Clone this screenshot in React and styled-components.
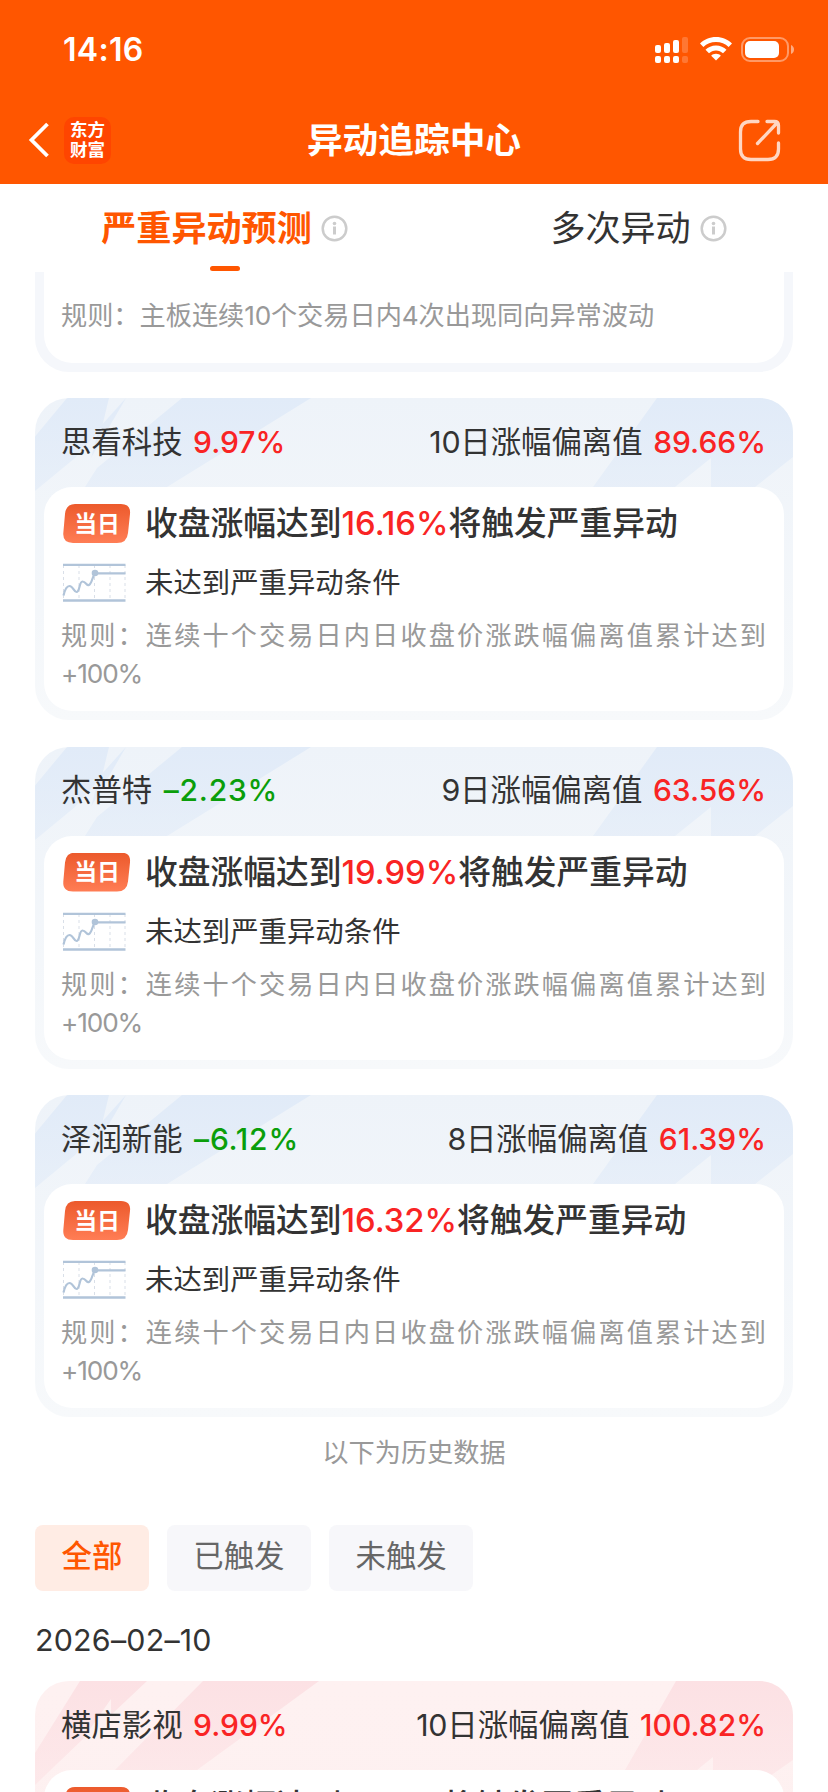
import React from 'react';
import styled, { createGlobalStyle, css } from 'styled-components';

const Global = createGlobalStyle`
  * { box-sizing: border-box; }
  body {
    margin: 0;
    background: #fff;
    font-family: Inter, "Noto Sans CJK SC", sans-serif;
    color: #333;
  }
`;

const Screen = styled.div`
  display: flex;
  flex-direction: column;
  width: 828px;
  height: 1792px;
  overflow: hidden;
  background: #fff;
`;

const Header = styled.header`
  flex: none;
  height: 184px;
  background: #ff5600;
  color: #fff;
`;

const StatusBar = styled.div`
  display: flex;
  align-items: center;
  justify-content: space-between;
  height: 100px;
  padding: 0 34px 0 63px;
`;

const Clock = styled.span`
  font-size: 32px;
  font-weight: 600;
  line-height: 40px;
  letter-spacing: 0.3px;
`;

const NavBar = styled.div`
  display: grid;
  grid-template-columns: 1fr auto 1fr;
  align-items: center;
  height: 80px;
  padding: 0 28px;
`;

const NavLeft = styled.div`
  display: flex;
  align-items: center;
  gap: 14px;
`;

const Logo = styled.div`
  width: 47px;
  height: 47px;
  padding: 2px 0 0 6px;
  border-radius: 10px;
  background: #ff4500;
  font-family: "Noto Sans CJK SC", sans-serif;
  font-size: 17.5px;
  font-weight: 700;
  line-height: 20px;
  white-space: pre-line;
`;

const Title = styled.h1`
  margin: 0;
  font-size: 35.7px;
  font-weight: 700;
  line-height: 50px;
`;

const NavRight = styled.div`
  display: flex;
  justify-content: flex-end;
  padding-right: 19px;
`;

const Tabs = styled.nav`
  flex: none;
  display: flex;
  justify-content: space-around;
  height: 88px;
`;

const Tab = styled.div`
  display: flex;
  flex-direction: column;
  align-items: center;
  justify-content: flex-end;
  font-size: 35.1px;
  font-weight: ${(p) => (p.$active ? 700 : 400)};
  color: ${(p) => (p.$active ? '#ff5600' : '#333')};
  &::after {
    content: '';
    width: 30px;
    height: 5px;
    margin: 11px 0 1px;
    border-radius: 2.5px;
    background: ${(p) => (p.$active ? '#ff5600' : 'transparent')};
  }
`;

const TabLabel = styled.div`
  display: flex;
  align-items: center;
  gap: 9px;
  line-height: 54px;
`;

const Feed = styled.main`
  flex: 1;
  min-height: 0;
  overflow: hidden;
  padding: 0 35px;
`;

const tones = {
  blue: {
    top: '#eef3f9',
    bottom: '#f7f9fb',
    beam: '#e1ebf8',
    shapes: [
      'M32 0H74L67 29L40 60L-18 108V60Z',
      'M91 0L64 30L56 60Z',
      'M147 0H276L132 89H50L62 70Z',
      'M622 0H758V59L720 89H676V60L640 89H558Z',
    ],
  },
  red: {
    top: '#fef1f1',
    bottom: '#fdf0f0',
    beam: '#fce1e4',
    shapes: [
      'M45 0H112L76 34V18L48 58L0 104V72Z',
      'M168 0H284L162 89H80Z',
      'M641 0H758V79L722 104H678V76L662 89H590Z',
    ],
  },
};

const Card = styled.section`
  display: grid;
  grid-template-columns: 100%;
  height: ${(p) => p.$height || 322}px;
  margin-bottom: ${(p) => p.$gap ?? 26.5}px;
  border-radius: ${(p) => (p.$cut ? '0 0 34px 34px' : '34px')};
  overflow: hidden;
  background: ${(p) =>
    p.$cut ? '#f5f7fb' : `linear-gradient(${tones[p.$tone].top}, ${tones[p.$tone].bottom})`};
`;

const Beams = styled.svg`
  grid-area: 1 / 1;
  display: block;
  width: 758px;
  height: 322px;
`;

const CardContent = styled.div`
  grid-area: 1 / 1;
  display: flex;
  flex-direction: column;
  padding: 0 9px 9px;
`;

const CardHead = styled.div`
  flex: none;
  display: flex;
  align-items: center;
  justify-content: space-between;
  height: 89px;
  padding: 0 18px 2px 17px;
  font-size: 30.4px;
  line-height: 44px;
`;

const Pair = styled.div`
  display: flex;
  gap: 10.5px;
`;

const Value = styled.span`
  font-size: 30px;
  font-weight: 500;
  letter-spacing: ${(p) => (p.$down ? 0.8 : 0)}px;
  padding-left: ${(p) => (p.$down ? 1 : 0)}px;
  color: ${(p) => (p.$down ? '#0a9e0a' : '#f92424')};
`;

const Digits = styled.span`
  letter-spacing: -0.3px;
`;

const Panel = styled.div`
  flex: 1;
  min-height: 0;
  padding: ${(p) => (p.$cut ? 25 : 11)}px 18px 0 17px;
  border-radius: ${(p) => (p.$cut ? '0 0 28px 28px' : '28px')};
  background: #fff;
`;

const Line = styled.div`
  display: flex;
  ${(p) =>
    p.$strong
      ? css`
          height: 56px;
          font-size: 32.75px;
          font-weight: 500;
          line-height: 50px;
        `
      : css`
          height: 63px;
          font-size: 28.4px;
          line-height: 58px;
        `}
`;

const IconSlot = styled.div`
  flex: none;
  width: 84px;
  padding: ${(p) => p.$top}px 0 0 ${(p) => p.$left}px;
`;

const Tag = styled.div`
  display: grid;
  place-content: center;
  width: 68px;
  height: 39px;
  clip-path: path('M12 0 H58 Q68 0 67 10 L65 29 Q64 39 54 39 H10 Q-0.5 39 0.3 29 L2 10 Q3 0 12 0 Z');
  background: linear-gradient(#ec5a2c, #ff7d55);
  color: #fff;
  font-size: 22.8px;
  font-weight: 700;
  line-height: 38px;
`;

const Accent = styled.span`
  color: #f92424;
`;

const Rule = styled.p`
  margin: 0;
  font-size: 26.2px;
  line-height: 38px;
  color: #999;
  text-align: justify;
`;

const Percent = styled.span`
  letter-spacing: -1.1px;
`;

const HistoryNote = styled.div`
  height: 108px;
  padding-top: 18px;
  font-size: 26.2px;
  line-height: 36px;
  text-align: center;
  color: #999;
`;

const Filters = styled.div`
  display: flex;
  gap: 18px;
`;

const Chip = styled.button`
  height: 66px;
  padding: 0 26.5px 8px;
  border: 0;
  border-radius: 8px;
  font: inherit;
  font-size: 30.4px;
  font-weight: ${(p) => (p.$active ? 500 : 400)};
  color: ${(p) => (p.$active ? '#ff5600' : '#666')};
  background: ${(p) => (p.$active ? '#ffece4' : '#f7f7fa')};
`;

const DateLabel = styled.div`
  height: 90px;
  padding-top: 29px;
  font-size: 30.4px;
  line-height: 40px;
  letter-spacing: 0.2px;
`;

function Signal() {
  return (
    <svg width="33" height="26" viewBox="0 0 33 26" fill="#fff">
      <rect x="0" y="8" width="6" height="8" rx="2" />
      <rect x="9" y="6" width="6" height="10" rx="2" />
      <rect x="18" y="3" width="6" height="13" rx="2" />
      <rect x="27" y="0" width="6" height="16" rx="2" opacity="0.2" />
      <rect x="0" y="19" width="6" height="7" rx="2" />
      <rect x="9" y="19" width="6" height="7" rx="2" />
      <rect x="18" y="19" width="6" height="7" rx="2" />
      <rect x="27" y="19" width="6" height="7" rx="2" opacity="0.2" />
    </svg>
  );
}

function Wifi() {
  return (
    <svg width="32" height="24" viewBox="0 0 32 24" fill="#fff">
      <path d="M16 0C22.300 0 28 2.400 32 6.500L28.600 9.900C25.300 6.600 20.900 4.900 16 4.900S6.700 6.600 3.400 9.900L0 6.500C4 2.400 9.700 0 16 0Z" />
      <path d="M16 8.500C20.200 8.500 23.900 10.100 26.500 12.800L23 16.300C21.200 14.500 18.800 13.400 16 13.400S10.800 14.500 9 16.300L5.500 12.800C8.100 10.100 11.800 8.500 16 8.500Z" />
      <path d="M16 16.800C18 16.800 19.700 17.500 20.800 18.700L16 23.600L11.200 18.700C12.300 17.500 14 16.800 16 16.800Z" />
    </svg>
  );
}

function Battery() {
  return (
    <svg width="53" height="26" viewBox="0 0 53 26">
      <rect x="1" y="1" width="46" height="23" rx="8" fill="none" stroke="#fff" strokeOpacity="0.4" strokeWidth="2" />
      <rect x="4" y="4" width="34" height="17" rx="5" fill="#fff" />
      <path d="M50 8C52 9 53 10.500 53 12.500S52 16 50 17Z" fill="#fff" fillOpacity="0.5" />
    </svg>
  );
}

const StatusIcons = styled.div`
  display: flex;
  align-items: flex-start;
  gap: 9px;
  height: 26px;
`;

const SignalSlot = styled.div`
  display: flex;
  padding-right: 3px;
`;

function BackArrow() {
  return (
    <svg width="22" height="36" viewBox="0 0 22 36">
      <path d="M19.500 2L3.500 18L19.500 34" fill="none" stroke="#fff" strokeWidth="3.800" />
    </svg>
  );
}

function Share() {
  return (
    <svg width="43" height="43" viewBox="0 0 43 43" fill="none" stroke="#fff" strokeOpacity="0.76" strokeWidth="3.300" strokeLinecap="round" strokeLinejoin="round">
      <path d="M20 2.500H13Q2.500 2.500 2.500 13V30Q2.500 40.500 13 40.500H30Q40.500 40.500 40.500 30V24M29 2.500H36.500Q40.500 2.500 40.500 6.500V14M39 4L19.500 24.500" />
    </svg>
  );
}

function Info() {
  return (
    <svg width="27" height="27" viewBox="0 0 27 27">
      <circle cx="13.500" cy="13.500" r="11.800" fill="none" stroke="#ccc" strokeWidth="2.500" />
      <circle cx="13.500" cy="8.500" r="1.800" fill="#ccc" />
      <path d="M13.500 11.500V19.500" stroke="#ccc" strokeWidth="3" />
    </svg>
  );
}

const ChartSvg = styled.svg`
  display: block;
`;

function Chart() {
  return (
    <ChartSvg width="64" height="40" viewBox="0 0 64 40" fill="none">
      <path d="M1.500 2V38M17 2V38M32.500 2V38M48 2V38M63 2V38" stroke="#d9dfe8" strokeWidth="1" strokeDasharray="3 3" />
      <path d="M1 1.800H63.500M1 37.500H63.500M33 10.300H63.500" stroke="#b1c4d9" strokeWidth="2.300" />
      <path d="M1.500 32.500C3 26 5 23 7.500 23C11 23 12 29 14.500 29C18 29 17 18.500 20.500 18.500C24 18.500 24.500 23 27 22C30 20.500 30 14 33 10.500" stroke="#b1c4d9" strokeWidth="2.200" />
      <circle cx="33" cy="10" r="3.300" fill="#b1c4d9" />
    </ChartSvg>
  );
}

function CardBeams({ tone }) {
  const id = `beam-${tone}`;
  return (
    <Beams viewBox="0 0 758 322">
      <defs>
        <linearGradient id={id} x1="0" y1="0" x2="0" y2="130" gradientUnits="userSpaceOnUse">
          <stop offset="0" stopColor={tones[tone].beam} />
          <stop offset="1" stopColor={tones[tone].beam} stopOpacity="0.4" />
        </linearGradient>
      </defs>
      <g fill={`url(#${id})`}>
        {tones[tone].shapes.map((d) => <path key={d} d={d} />)}
      </g>
    </Beams>
  );
}

function StockCard({ name, change, down, days, deviation, target, tone = 'blue', gap }) {
  return (
    <Card $tone={tone} $gap={gap}>
      <CardBeams tone={tone} />
      <CardContent>
        <CardHead>
          <Pair>
            <span>{name}</span>
            <Value $down={down}>{change}</Value>
          </Pair>
          <Pair>
            <span><Digits>{days}</Digits>日涨幅偏离值</span>
            <Value>{deviation}</Value>
          </Pair>
        </CardHead>
        <Panel>
          <Line $strong>
            <IconSlot $top={6} $left={2}><Tag>当日</Tag></IconSlot>
            <span>收盘涨幅达到<Accent>{target}</Accent>将触发严重异动</span>
          </Line>
          <Line>
            <IconSlot $top={9} $left={1}><Chart /></IconSlot>
            <span>未达到严重异动条件</span>
          </Line>
          <Rule>规则：连续十个交易日内日收盘价涨跌幅偏离值累计达到<Percent>+100%</Percent></Rule>
        </Panel>
      </CardContent>
    </Card>
  );
}

export default function App() {
  return (
    <Screen>
      <Global />
      <Header>
        <StatusBar>
          <Clock>14:16</Clock>
          <StatusIcons><SignalSlot><Signal /></SignalSlot><Wifi /><Battery /></StatusIcons>
        </StatusBar>
        <NavBar>
          <NavLeft>
            <BackArrow />
            <Logo>{'东方\n财富'}</Logo>
          </NavLeft>
          <Title>异动追踪中心</Title>
          <NavRight><Share /></NavRight>
        </NavBar>
      </Header>
      <Tabs>
        <Tab $active><TabLabel>严重异动预测<Info /></TabLabel></Tab>
        <Tab><TabLabel>多次异动<Info /></TabLabel></Tab>
      </Tabs>
      <Feed>
        <Card $cut $height={100} $gap={26}>
          <CardContent>
            <Panel $cut>
              <Rule>规则：主板连续<Digits>10</Digits>个交易日内<Digits>4</Digits>次出现同向异常波动</Rule>
            </Panel>
          </CardContent>
        </Card>
        <StockCard name="思看科技" change="9.97%" days="10" deviation="89.66%" target="16.16%" />
        <StockCard name="杰普特" change="–2.23%" down days="9" deviation="63.56%" target="19.99%" />
        <StockCard name="泽润新能" change="–6.12%" down days="8" deviation="61.39%" target="16.32%" gap={0} />
        <HistoryNote>以下为历史数据</HistoryNote>
        <Filters>
          <Chip $active>全部</Chip>
          <Chip>已触发</Chip>
          <Chip>未触发</Chip>
        </Filters>
        <DateLabel>2026–02–10</DateLabel>
        <StockCard tone="red" name="横店影视" change="9.99%" days="10" deviation="100.82%" target="11.16%" />
      </Feed>
    </Screen>
  );
}
